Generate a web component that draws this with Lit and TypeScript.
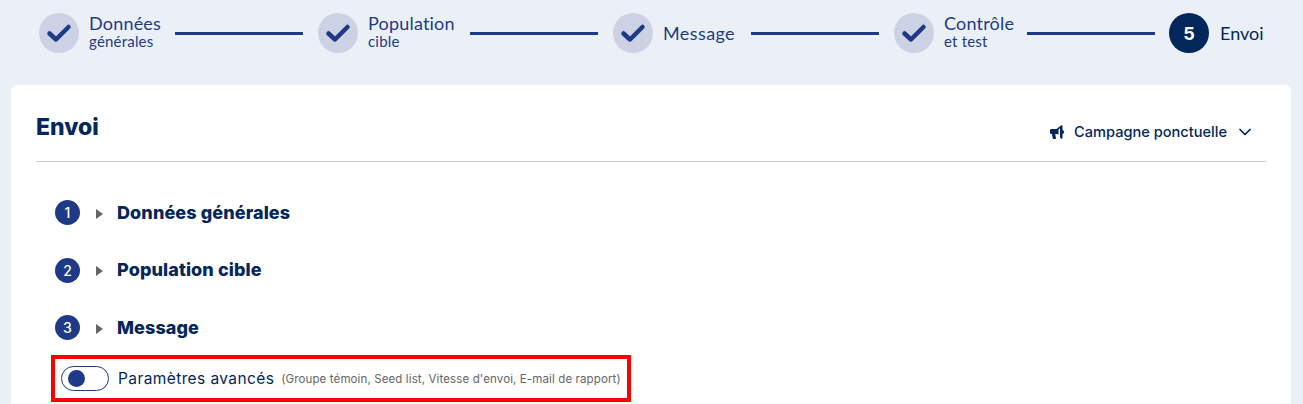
import { LitElement, html, css } from "lit";
import { customElement } from "lit/decorators.js";

const STEPS = [
  { a: "Données", b: "générales", w: 71 },
  { a: "Population", b: "cible", w: 87 },
  { a: "Message", b: "", w: 73 },
  { a: "Contrôle", b: "et test", w: 68 },
];

@customElement("app-root")
export class AppRoot extends LitElement {
  static styles = css`
    :host { display: block; width: 1303px; height: 404px; overflow: hidden; background: #ebf0f7; font-family: "Lato", "Noto Sans", sans-serif; color: #03265b; }
    * { box-sizing: border-box; }
    .stepper { display: flex; align-items: center; height: 85px; padding: 0 0 19px 39px; }
    .step { display: flex; align-items: center; gap: 10px; flex: none; }
    .circle { width: 40px; height: 40px; border-radius: 50%; background: #ccd2e4; display: flex; align-items: center; justify-content: center; flex: none; }
    .circle svg { width: 26px; height: 20px; display: block; }
    .circle.now { background: #03265b; color: #fff; font: 700 18px "Inter", sans-serif; margin-left: -1px; }
    .label { flex: none; color: #1e3a86; white-space: nowrap; display: flex; flex-direction: column; margin-top: -2px; }
    .label .a { font-size: 18px; letter-spacing: 0.2px; line-height: 18px; }
    .label .b { font-size: 15px; letter-spacing: 0.2px; line-height: 18px; }
    .label.single { margin-top: -1px; }
    .label.single .a { line-height: 24px; letter-spacing: 0.4px; }
    .label.cur { color: #03265b; margin-left: 1px; }
    .label.cur .a { letter-spacing: 0; }
    .line { width: 128px; height: 3px; background: #1e3a86; margin: 0 15px; flex: none; }
    .card { margin: 0 12px 0 11px; height: 330px; background: #fff; border-radius: 6px 6px 0 0; padding: 0 25px; }
    .head { height: 77px; border-bottom: 1px solid #cfcfcf; display: flex; justify-content: space-between; align-items: flex-end; padding: 0 15px 20px 0; }
    h1 { margin: 0; font: 800 23px/28px "Inter", sans-serif; color: #03265b; }
    .camp { display: flex; align-items: center; font: 500 14.6px/20px "Inter", sans-serif; color: #03265b; gap: 10px; margin-bottom: -1px; }
    .camp .mega { width: 14px; height: 14px; }
    .camp .chev { width: 12px; height: 8px; margin-left: 2px; }
    .rows { padding: 22px 0 0 19px; display: flex; flex-direction: column; }
    .row { display: flex; align-items: center; height: 57.5px; }
    .num { width: 25px; height: 25px; border-radius: 50%; background: #1e3a86; color: #fff; font: 500 14px "Inter", sans-serif; display: flex; align-items: center; justify-content: center; flex: none; }
    .tri { width: 0; height: 0; border-left: 7px solid #666; border-top: 5px solid transparent; border-bottom: 5px solid transparent; margin: 2px 14px 0 16px; flex: none; }
    .title { font: 800 18px/24px "Inter", sans-serif; letter-spacing: 0.1px; color: #03265b; white-space: nowrap; }
    .adv { width: 580px; height: 47px; border: 4px solid #fe0000; margin: -2px 0 0 -4px; display: flex; align-items: center; padding: 0 0 0 6px; }
    .toggle { width: 48px; height: 25px; border: 1px solid #1e3a86; border-radius: 13px; display: flex; align-items: center; padding-left: 6px; flex: none; }
    .toggle i { width: 17px; height: 17px; border-radius: 50%; background: #1e3a86; display: block; }
    .advt { margin: 1px 0 0 9px; font: 400 15.5px "Inter", sans-serif; letter-spacing: 0.4px; color: #03265b; white-space: nowrap; }
    .advs { margin: 2px 0 0 7px; font: 400 11.5px "Inter", sans-serif; letter-spacing: 0.12px; color: #666; white-space: nowrap; }
  `;

  private ck() {
    return html`<svg viewBox="0 0 26 20"><path d="M3.500 10.500 L10 16.500 L22.500 4" fill="none" stroke="#1e3a86" stroke-width="4.500" stroke-linecap="round" stroke-linejoin="round"/></svg>`;
  }

  render() {
    return html`
      <div class="stepper">
        ${STEPS.map(s => html`
          <div class="step">
            <div class="circle">${this.ck()}</div>
            <div class="label ${s.b ? "" : "single"}" style="width:${s.w}px">
              <span class="a">${s.a}</span>${s.b ? html`<span class="b">${s.b}</span>` : ""}
            </div>
          </div>
          <div class="line"></div>`)}
        <div class="step">
          <div class="circle now">5</div>
          <div class="label single cur"><span class="a">Envoi</span></div>
        </div>
      </div>
      <div class="card">
        <div class="head">
          <h1>Envoi</h1>
          <div class="camp">
            <svg class="mega" viewBox="0 0 14 14"><path fill="#03265b" d="M0 5.5C0 4.5.7 4 1.500 4H6.500l4.500-3.500c.8-.5 1.500 0 1.500.8V5c.9.4 1.500 1 1.500 2s-.6 1.600-1.500 2v3.700c0 .8-.7 1.300-1.500.8L10 12.200V3.200L8.500 4.500v5L6.500 9H5.200l.8 4.200c.1.500-.2.800-.6.800H3.500c-.4 0-.7-.3-.8-.7L2 9H1.500C.7 9 0 8.500 0 7.500z"/></svg>
            <span>Campagne ponctuelle</span>
            <svg class="chev" viewBox="0 0 12 8"><path d="M1 1.500 L6 6.500 L11 1.500" fill="none" stroke="#03265b" stroke-width="1.700" stroke-linecap="round" stroke-linejoin="round"/></svg>
          </div>
        </div>
        <div class="rows">
          ${["Données générales", "Population cible", "Message"].map((t, i) => html`
            <div class="row"><div class="num">${i + 1}</div><div class="tri"></div><div class="title">${t}</div></div>`)}
          <div class="adv">
            <div class="toggle"><i></i></div>
            <span class="advt">Paramètres avancés</span>
            <span class="advs">(Groupe témoin, Seed list, Vitesse d'envoi, E-mail de rapport)</span>
          </div>
        </div>
      </div>
    `;
  }
}
